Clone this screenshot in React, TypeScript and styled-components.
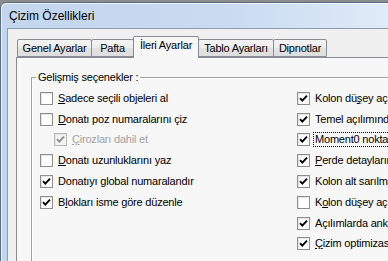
import React from 'react';
import styled, { createGlobalStyle } from 'styled-components';

const GlobalStyle = createGlobalStyle`
  html, body {
    margin: 0;
    padding: 0;
    width: 388px;
    height: 261px;
    overflow: hidden;
    background: linear-gradient(#8c8c8c, #5a5a5a);
  }
`;

const Window = styled.div`
  margin-top: 2px;
  width: 560px;
  height: 400px;
  box-sizing: border-box;
  border: 1px solid #5b6c80;
  border-radius: 6px 6px 0 0;
  padding: 0 6px;
  display: flex;
  flex-direction: column;
  background: linear-gradient(90deg, #c2d6ee 0%, #c9dbf1 40%, #d9e7f6 62%, #e2edf9 72%, #cadcf2 90%, #c6d9f0 100%);
  box-shadow: inset 1px 1px 0 rgba(255, 255, 255, 0.65);
`;

const TitleBar = styled.div`
  flex: none;
  height: 25px;
  display: flex;
  align-items: center;
  padding-left: 2px;
  font-family: 'Liberation Sans', Arial, sans-serif;
  font-size: 12px;
  color: #000;
`;

const Client = styled.div`
  flex: 1;
  min-height: 0;
  display: flex;
  flex-direction: column;
  border: 1px solid #8c9db1;
  background: #f0f0f0;
  padding: 7px 0 0 8px;
`;

const TabStrip = styled.div`
  flex: none;
  display: flex;
  align-items: flex-end;
  height: 21px;
  margin-left: 1px;
  position: relative;
  z-index: 1;
`;

const Tab = styled.div<{ $w: number; $active?: boolean }>`
  width: ${p => p.$w}px;
  box-sizing: border-box;
  height: ${p => (p.$active ? 22 : 18)}px;
  margin-bottom: ${p => (p.$active ? -1 : 0)}px;
  margin-left: -1px;
  &:first-child {
    margin-left: 0;
  }
  border: 1px solid #898c95;
  border-bottom: ${p => (p.$active ? 'none' : '1px solid #898c95')};
  border-radius: 2px 2px 0 0;
  background: ${p =>
    p.$active
      ? '#f7f7f7'
      : 'linear-gradient(#f4f4f4 0%, #ececec 50%, #e2e2e2 51%, #dedede 100%)'};
  position: relative;
  z-index: ${p => (p.$active ? 2 : 1)};
  display: flex;
  justify-content: center;
  padding-top: 2px;
  font-family: 'Liberation Sans', Arial, sans-serif;
  font-size: 11px;
  letter-spacing: -0.2px;
  color: #000;
  line-height: 13px;
`;

const Panel = styled.div`
  flex: 1;
  min-height: 0;
  border: 1px solid #898c95;
  background: #f7f7f7;
  padding: 13px 0 0 14px;
`;

const Group = styled.fieldset`
  margin: 0;
  width: 480px;
  height: 260px;
  box-sizing: border-box;
  border: 1px solid #a3a3a3;
  box-shadow: inset 1px 1px 0 #ffffff;
  padding: 4px 0 0 8px;
  font-family: 'Liberation Sans', Arial, sans-serif;
  font-size: 11px;
  letter-spacing: -0.2px;
  color: #000;
`;

const Legend = styled.legend`
  padding: 0 2px;
  margin-left: -4px;
  line-height: 13px;
`;

const Columns = styled.div`
  display: grid;
  grid-template-columns: 257px 1fr;
`;

const Column = styled.div`
  display: flex;
  flex-direction: column;
`;

const Row = styled.div<{ $indent?: number }>`
  height: 20.8px;
  display: flex;
  align-items: center;
  padding-left: ${p => p.$indent || 0}px;
  white-space: nowrap;
`;

const Box = styled.span<{ $disabled?: boolean }>`
  width: 13px;
  height: 13px;
  box-sizing: border-box;
  flex: none;
  border: 1px solid ${p => (p.$disabled ? '#b8b8b8' : '#8e8f8f')};
  background: ${p => (p.$disabled ? '#f2f2f2' : '#ffffff')};
  box-shadow: inset 1px 1px 0 ${p => (p.$disabled ? '#e6e6e6' : '#e4e4e4')};
  display: flex;
  align-items: center;
  justify-content: center;
`;

const Label = styled.span<{ $disabled?: boolean; $focus?: boolean }>`
  margin-left: ${p => (p.$focus ? 4 : 5)}px;
  color: ${p => (p.$disabled ? '#a3a3a3' : '#000')};
  line-height: 13px;
  padding: 0 ${p => (p.$focus ? 1 : 0)}px;
  outline: ${p => (p.$focus ? '1px dotted #000' : 'none')};
  outline-offset: 0;
`;

const Check = ({ color }: { color: string }) => (
  <svg width="9" height="9" viewBox="0 0 9 9">
    <path d="M1 4.2 L3.3 6.6 L8 1.6" fill="none" stroke={color} strokeWidth="1.9" />
  </svg>
);

type Item = {
  text: React.ReactNode;
  checked?: boolean;
  disabled?: boolean;
  indent?: number;
  focus?: boolean;
};

const leftItems: Item[] = [
  { text: <><u>S</u>adece seçili objeleri al</> },
  { text: <><u>D</u>onatı poz numaralarını çiz</> },
  { text: <><u>Ç</u>irozları dahil et</>, checked: true, disabled: true, indent: 14 },
  { text: <><u>D</u>onatı uzunluklarını yaz</> },
  { text: <>Donatıyı <u>g</u>lobal numaralandır</>, checked: true },
  { text: <>B<u>l</u>okları isme göre düzenle</>, checked: true },
];

const rightItems: Item[] = [
  { text: <>Kolon dü<u>ş</u>ey aç</>, checked: true },
  { text: <>Temel açılımında</>, checked: true },
  { text: <>Moment0 nokta</>, checked: true, focus: true },
  { text: <><u>P</u>erde detayların</>, checked: true },
  { text: <>Kolon alt sarılma</>, checked: true },
  { text: <>K<u>o</u>lon düşey aç</> },
  { text: <>Açılımlarda ankr</>, checked: true },
  { text: <><u>Ç</u>izim optimizasy</>, checked: true },
];

const CheckRow = ({ item }: { item: Item }) => (
  <Row $indent={item.indent}>
    <Box $disabled={item.disabled}>
      {item.checked && <Check color={item.disabled ? '#8d8d8d' : '#000'} />}
    </Box>
    <Label $disabled={item.disabled} $focus={item.focus}>
      {item.text}
    </Label>
  </Row>
);

const tabs = [
  { label: 'Genel Ayarlar', w: 75 },
  { label: 'Pafta', w: 43 },
  { label: 'İleri Ayarlar', w: 66, active: true },
  { label: 'Tablo Ayarları', w: 76 },
  { label: 'Dipnotlar', w: 54 },
];

export default function App() {
  return (
    <>
      <GlobalStyle />
      <Window>
        <TitleBar>Çizim Özellikleri</TitleBar>
        <Client>
          <TabStrip>
            {tabs.map(t => (
              <Tab key={t.label} $w={t.w} $active={t.active}>
                {t.label}
              </Tab>
            ))}
          </TabStrip>
          <Panel>
            <Group>
              <Legend>Gelişmiş seçenekler :</Legend>
              <Columns>
                <Column>
                  {leftItems.map((item, i) => (
                    <CheckRow key={i} item={item} />
                  ))}
                </Column>
                <Column>
                  {rightItems.map((item, i) => (
                    <CheckRow key={i} item={item} />
                  ))}
                </Column>
              </Columns>
            </Group>
          </Panel>
        </Client>
      </Window>
    </>
  );
}
